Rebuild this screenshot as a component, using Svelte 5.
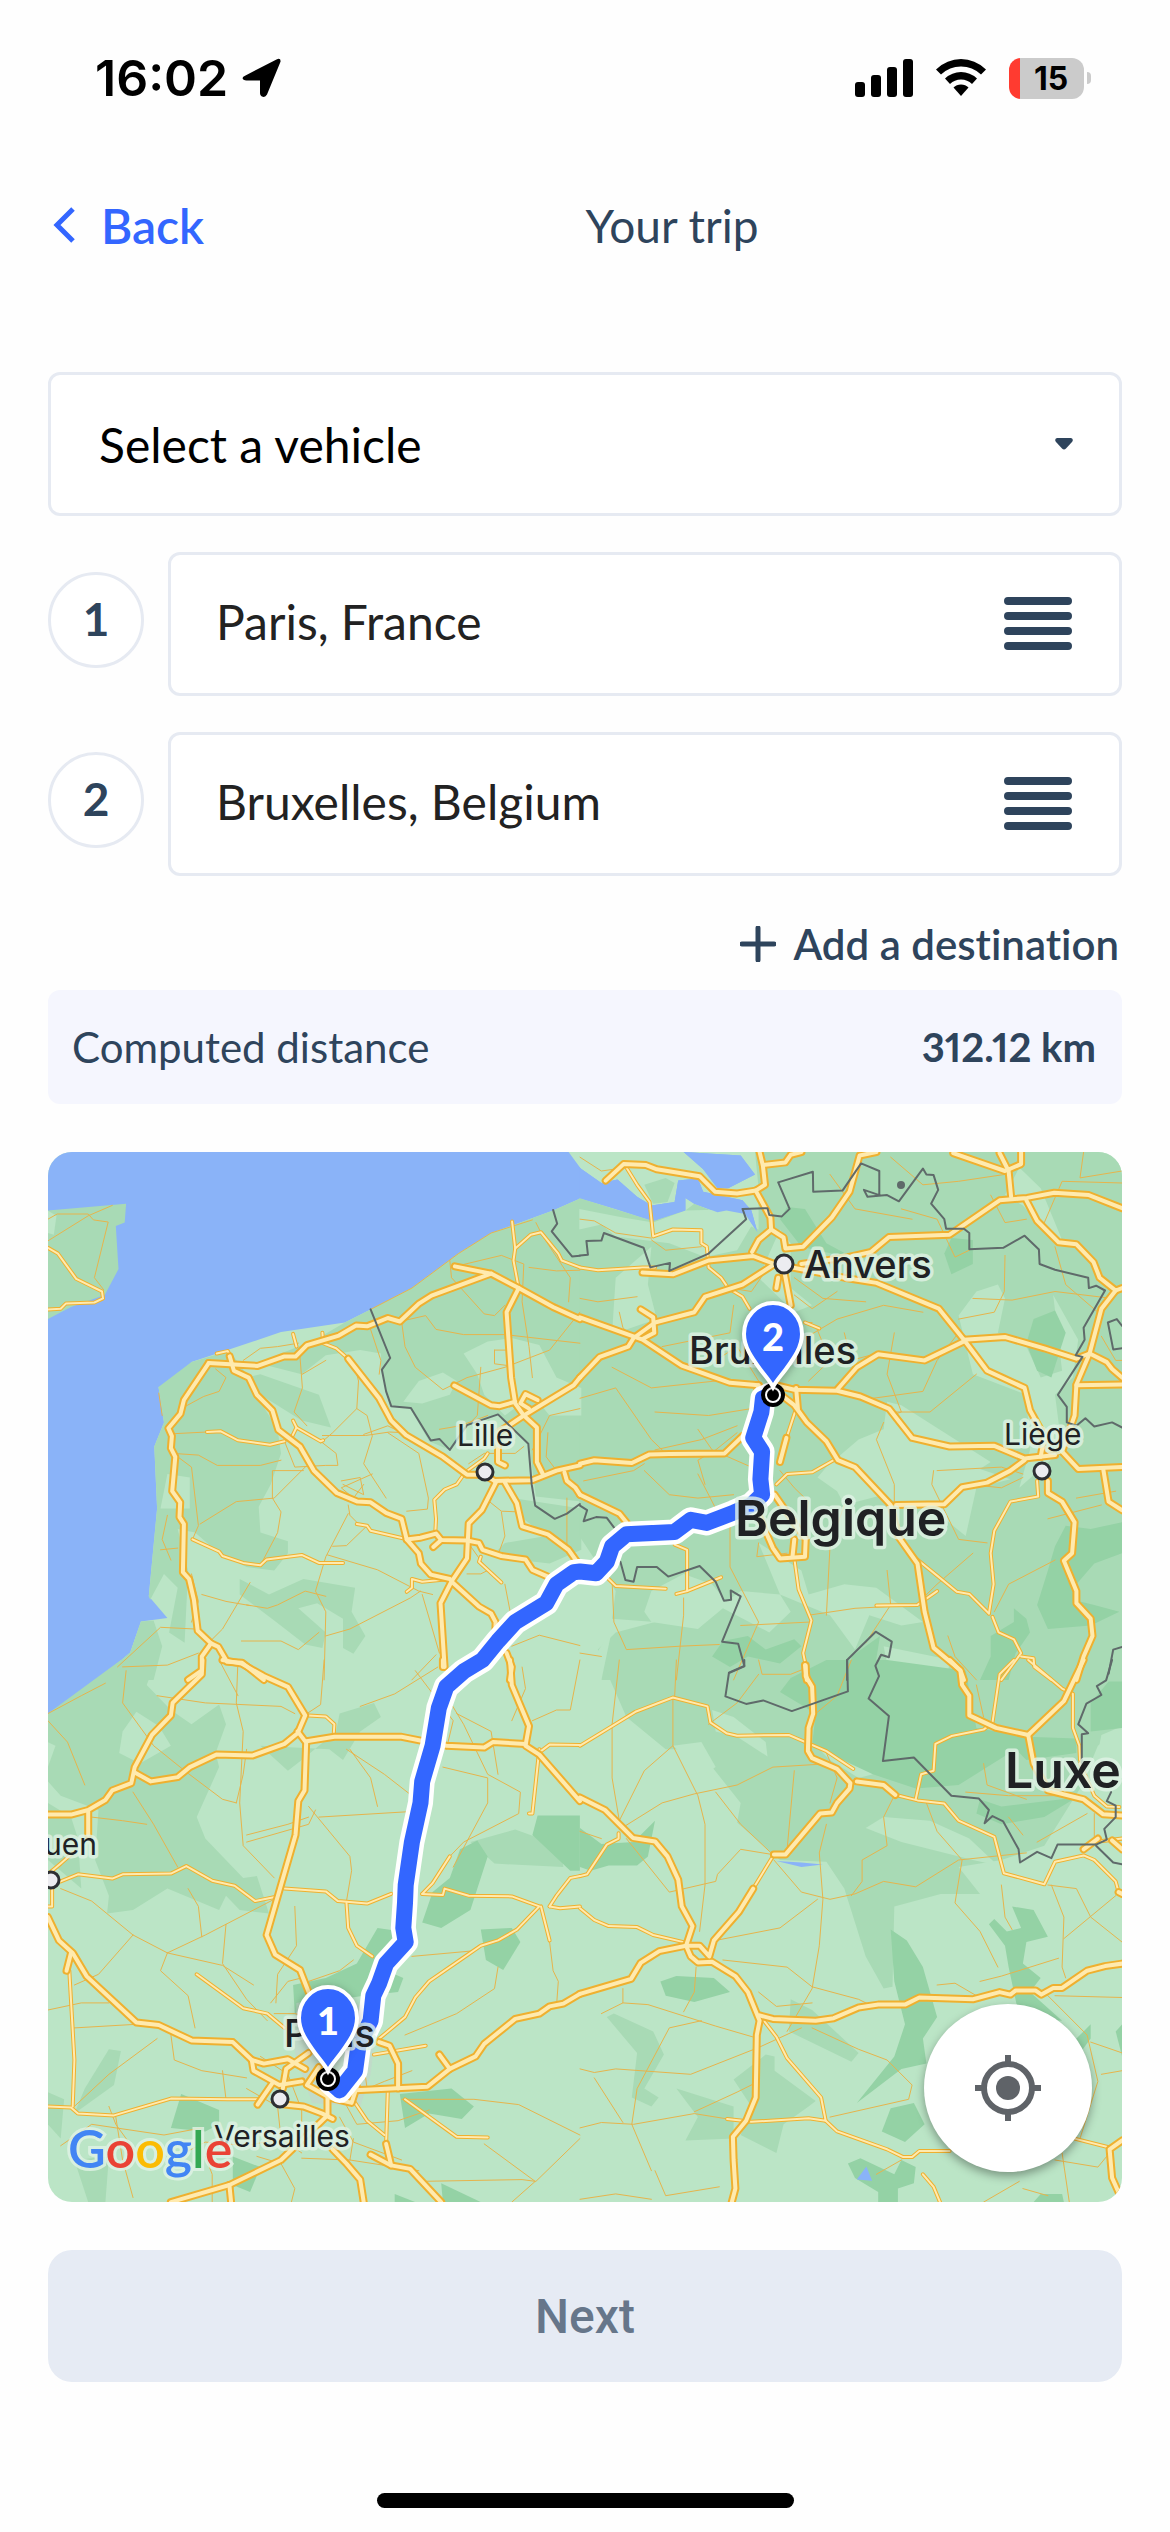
<script lang="ts">
  type Sheet = {
    x: number;
    y: number;
    sx: number;
    sy: number;
    water: string[];
    wood: string[];
    meadow: string[];
    forest: string[];
    minor: string[];
    medium: string[];
    major: string[];
    borders: string[];
  };

  // Map geometry, split in four sheets that each have their own origin and scale
  const nw: Sheet = {
    x: -8,
    y: -12,
    sx: 2.904,
    sy: 2.904,
    water: [
      '23,0 1530,0 1535,35 1572,85 1572,168 1490,205 1310,270 1215,330 1080,430 960,492 885,530 700,558 560,605 440,645 385,710 344,717 360,820 332,890 340,1070 316,1325 370,1388 293,1398 262,1488 168,1568 100,1625 23,1665',
    ],
    wood: [
      '23,205 250,185 246,240 220,250 228,375 188,450 90,485 23,520',
      '344,717 440,645 550,612 600,680 640,760 690,840 700,910 670,1000 635,1065 640,1140 720,1165 720,1200 680,1250 600,1240 520,1200 450,1140 400,1130 430,1250 420,1460 375,1430 400,1300 360,1260 320,1335 316,1325 340,1070 332,890 360,820',
      '885,530 960,492 1080,430 1215,330 1310,270 1490,205 1572,168 1572,1050 1440,1035 1420,880 1330,800 1240,830 1190,900 1130,875 1075,780 1020,770 990,670 990,620 930,610 830,625 760,680 640,650 700,620 800,580',
      '600,690 640,680 810,740 845,835 760,815 640,740',
      '580,1275 665,1320 765,1275 915,1300 905,1370 945,1440 910,1492 880,1475 880,1390 805,1345 750,1360 830,1430 820,1475 770,1465 680,1395 580,1320',
      '1370,1040 1572,1070 1572,1190 1480,1230 1310,1210 1350,1170 1470,1150 1390,1090',
      '293,1398 330,1395 355,1470 330,1568 168,1568 262,1488',
    ],
    meadow: [
      '23,205 48,220 40,275 23,270',
      '370,970 435,980 435,1070 350,1070',
      '1230,620 1300,585 1370,575 1450,595 1500,690 1572,720 1572,800 1480,800 1430,740 1350,800 1290,740 1270,680',
      '1055,760 1100,700 1170,675 1210,700 1190,740 1110,765',
    ],
    forest: [],
    minor: [
      '23,230 50,215 140,215 155,232 198,238 158,400 185,435',
      '23,293 140,220 210,190',
      '960,492 1080,430 1215,330 1310,270 1430,232',
      '960,550 990,640 985,680',
      '1045,527 1120,510 1150,550 1230,565 1350,565 1568,590',
      '1190,350 1195,400 1290,505 1320,510 1350,480',
      '1215,365 1340,335 1405,360 1400,470 1420,600 1430,690',
      '1050,527 1060,600 1090,660 1170,725 1240,690 1350,660 1480,610 1568,500',
      '1420,370 1500,380 1568,378',
      '1440,240 1460,280 1540,400 1535,470',
      '755,630 762,720 738,790 775,830',
      '762,680 830,640',
      '590,640 640,605 690,600 750,590',
      '910,640 925,700 920,780 850,850 815,880',
      '920,780 950,800 965,860 940,940 1005,1040',
      '940,855 1010,830 1050,850',
      '820,858 945,858 1015,848 1060,850',
      '700,930 640,945 515,945 460,915 385,910',
      '770,950 680,1040 570,1050 465,1115',
      '765,960 675,960 675,1040 700,1080 690,1140 640,1235',
      '710,875 740,950 830,945 865,945 860,910 815,875',
      '388,853 485,848',
      '345,735 355,800',
      '410,780 475,745 520,730 540,690 510,665',
      '443,1160 460,1120 440,950 400,920',
      '350,1190 400,1185',
      '895,1085 830,1210 800,1310 830,1370 825,1568',
      '895,1060 900,1090 930,1120',
      '1065,1078 1125,1072 1128,1040 1100,910 1010,850',
      '850,1180 890,1178 950,1120',
      '835,1205 980,1248 1100,1310 1140,1320',
      '600,1350 660,1360 690,1350 770,1310 830,1325',
      '610,1285 530,1420 500,1450',
      '470,1320 540,1340 610,1352',
      '585,1455 700,1455 750,1480 810,1430',
      '830,1440 900,1420 1075,1330 1105,1310',
      '1110,1320 1160,1490',
      '1370,1470 1450,1438 1568,1468',
      '225,1530 350,1415 450,1420',
      '240,1530 370,1525 460,1490',
      '1568,780 1480,800 1430,900',
      '1245,940 1290,910 1380,910 1405,890',
      '1220,850 1270,800 1280,660',
      '1320,610 1320,650 1360,655 1355,610 1320,610',
      '1475,850 1470,920 1500,960',
      '1150,1495 1080,1568',
      '875,990 930,980 940,1030 880,1000',
      '965,970 875,1010 910,1040 940,1000',
      '1340,1080 1350,1150 1330,1205',
      '1305,1050 1340,1078 1390,1080 1400,1120',
      '1350,1290 1375,1420',
      '380,1220 355,1160 370,1090',
      '440,1260 460,1340 440,1400',
      '1240,1165 1300,1250 1280,1260 1240,1260',
      '1160,840 1220,830 1300,800',
      '1530,1040 1530,1180',
    ],
    medium: [
      '735,563 745,600',
      '1380,315 1375,350 1390,430',
      '1371,237 1380,315 1425,275 1455,268 1505,330 1515,350 1568,370',
      '485,848 525,846 575,872 668,885 710,875',
      '23,313 52,330 105,403 180,440 183,460 158,472 75,475 60,490 23,492',
      '443,1160 520,1195 530,1208 590,1228 640,1235 658,1218 760,1205 810,1228 880,1228',
      '920,1115 950,1120 960,1135 1060,1158',
      '1230,972 1210,1000 1175,1015 1145,1045 1150,1100 1148,1140',
      '1280,1210 1275,1225 1340,1285',
      '730,865 745,835 735,815',
      '745,835 815,875 822,872',
      '513,620 545,613 552,625',
      '820,560 822,590 860,605 895,635',
      '1190,1275 1110,1283 1080,1275 1080,1300 1065,1312',
      '1235,965 1290,925 1300,910',
    ],
    major: [
      '490,648 632,656 708,629 742,629 775,596 868,568 918,539 950,541 1010,517 1045,527 1100,475 1137,452 1310,388',
      '1205,367 1310,388 1390,430 1490,485 1568,520',
      '490,648 418,755 408,795 373,837 383,860 380,895 393,920 384,1020 407,1052 405,1095 418,1115 415,1255 433,1275 447,1335 458,1425 497,1462 518,1472 543,1515 587,1518 650,1568',
      '497,1462 470,1500 470,1540 430,1568',
      '551,628 563,670 606,690 630,740 675,785 692,842 755,890 795,960 862,1025 922,1050 960,1052 1005,1083 1050,1100 1065,1160 1100,1200 1106,1230 1135,1262 1190,1275',
      '895,635 985,750 1020,815 1063,857 1170,920 1240,972 1290,972 1320,990',
      '1203,713 1310,770 1335,773 1380,760',
      '1390,430 1355,500 1368,690 1380,765 1405,800 1443,835 1443,935 1460,970',
      '1568,690 1550,712 1405,800 1330,850 1330,935 1350,945',
      '1320,990 1430,988 1500,960 1568,945',
      '1065,1160 1105,1155 1150,1143 1165,1162 1240,1163 1275,1170 1285,1190 1340,1208 1410,1218 1430,1248 1475,1268',
      '1165,1162 1142,1182',
      '1325,992 1283,1075 1245,1113 1240,1215 1195,1282 1163,1345 1175,1530',
      '1350,995 1385,1055 1400,1122 1475,1145 1535,1190 1560,1225',
      '1195,1282 1275,1355 1310,1375 1323,1400 1322,1440',
      '1355,1490 1370,1530 1365,1568',
      '1523,965 1530,990 1555,1010 1568,1030',
      '1420,780 1395,765 1410,738 1445,755',
    ],
    borders: [
      '960,492 1017,633 993,667 1005,730 1020,773 1077,778 1135,873 1160,868 1190,900 1240,828 1330,797 1418,882 1428,1000 1438,1062 1495,1100 1530,1085 1568,1057',
      '1490,203 1502,243 1486,265 1545,338 1568,336',
    ],
  };

  const ne: Sheet = {
    x: 532,
    y: -12,
    sx: 2.8,
    sy: 2.904,
    water: [
      '-2,80 60,125 105,115 160,165 200,190 265,180 275,118 330,112 345,150 455,175 480,205 497,268 462,215 410,205 385,210 320,185 295,168 295,205 205,235 100,200 -2,168',
      '290,35 450,45 490,100 415,140 385,140 345,85',
    ],
    wood: [
      '-2,168 205,235 295,205 320,185 500,260 500,140 490,35 1568,35 1568,1568 60,1568 50,1480 100,1430 210,1400 90,1390 100,1310 -2,1150',
      '180,130 240,110 265,125 245,180 205,185',
    ],
    meadow: [
      '-2,200 120,225 205,240 295,205 465,200 480,250 440,320 350,340 250,300 100,280 60,245 -2,260',
      '100,400 200,310 190,420 215,520 130,550 90,560',
      '860,760 900,770 1150,935 1120,955 1205,985 1110,1010 1080,1150 960,1050 880,1050 850,1030 740,1060 720,1020 665,980 690,950 780,870 850,840',
      '1325,450 1395,580 1380,690 1330,740 1350,900 1230,1010 1260,900 1250,740 1100,680 1060,510 1110,440 1170,420 1190,460 1170,560 1250,600 1290,690 1350,670',
      '200,1310 290,1260 370,1290 410,1340 450,1310 560,1320 590,1370 530,1430 400,1360 330,1420 200,1400 180,1370',
      '500,1170 620,1250 640,1320 740,1290 830,1300 960,1400 900,1410 810,1380 770,1480 700,1380 560,1320',
      '1190,160 1230,80 1290,140 1350,290 1310,270 1240,190',
      '850,1470 1040,1510 1020,1568 870,1568',
      '500,400 560,260 590,300 590,430 650,480 600,500',
      '90,1420 -2,1568 60,1568',
    ],
    forest: [
      '580,195 630,200 690,300 770,345 620,310 560,230',
      '1040,285 1100,290 1100,360 1040,390 1020,330',
      '1270,520 1330,495 1360,560 1320,690 1280,670 1250,590',
      '1360,1120 1430,1130 1518,1110 1518,1200 1440,1230 1390,1290 1400,1340 1440,1350 1510,1370 1430,1410 1310,1420 1280,1350 1310,1250 1330,1180',
      '400,1455 470,1440 520,1480 600,1450 620,1470 560,1520 470,1500 420,1530 370,1500',
      '1150,1440 1215,1400 1215,1360 1250,1390 1260,1430 1220,1490 1200,1568 1120,1568 1150,1500',
      '760,1500 840,1440 820,1568 760,1568',
    ],
    minor: [
      '630,530 650,530',
      '110,500 120,545 150,575',
      '600,450 650,490 720,440',
      '590,600 720,520 850,480 960,500',
      '210,790 360,800 480,780',
      '330,840 370,900 480,950',
      '90,660 200,720 380,700',
      '0,750 100,720 200,870 240,910',
      '180,960 250,1030 330,1040 430,1030',
      '10,990 150,960 180,940',
      '330,970 380,1070',
      '350,1000 330,930 380,900 440,850',
      '660,540 700,640 640,700',
      '740,560 760,640 830,620',
      '880,560 860,680 900,790 870,800',
      '1100,460 1210,465 1330,440 1490,460',
      '1190,335 1188,440 1160,500 1060,520',
      '600,400 680,460 800,470',
      '900,200 1000,230 1050,340 1090,320',
      '700,100 770,200 930,230',
      '850,820 830,870 880,1000 880,1050',
      '740,930 860,1040',
      '990,960 985,1000 1060,1160 1140,1170',
      '1000,960 1180,950 1240,970',
      '1110,680 980,790 870,790',
      '640,1380 770,1360 950,1350',
      '740,1060 700,1180 690,1380',
      '450,1410 640,1400',
      '860,1250 870,1350 800,1460',
      '90,1280 95,1400 130,1480 280,1470 390,1465',
      '290,1330 290,1380 270,1568',
      '0,1490 60,1500',
      '500,1170 495,1210 580,1200',
      '1160,1370 1200,1290 1330,1220',
      '1390,1040 1500,1020',
      '1310,1100 1460,1060',
      '1300,240 1350,120 1518,125',
      '1410,35 1400,110 1518,90',
      '870,50 960,130 1060,120 1190,100',
      '230,600 420,560 430,480',
      '380,640 440,600 500,700',
      '0,230 40,235 100,270 200,285',
      '0,50 60,90 130,80',
      '420,430 480,440 520,380',
      '0,460 50,470 160,455',
      '440,830 340,870 210,900',
      '560,960 600,1010 640,1050 620,1150',
      '1030,1440 1050,1500 1110,1568',
      '1150,160 1190,240 1250,230',
      '1330,310 1360,420 1450,500',
      '1100,1200 1000,1290 940,1350',
      '420,1090 420,1240 500,1400 430,1568',
      '1460,570 1500,640 1518,640',
      '1060,560 1000,640 960,730 820,750',
      '200,290 240,320 340,310',
      '1240,980 1180,1010 1090,1000',
    ],
    medium: [
      '0,370 50,378 175,370 210,370',
      '130,80 160,130 195,180 205,280 260,260 340,262 340,300 355,310 360,370 395,400 415,430',
      '415,430 455,455 475,490',
      '630,530 670,547',
      '605,780 580,860',
      '550,1000 580,970 650,965 710,930',
      '600,1215 612,1305 648,1395 625,1490 632,1525',
      '1280,990 1283,1035 1205,1050 1160,1135 1150,1200 1158,1290 1145,1375',
      '1155,1385 1172,1430 1215,1450 1235,1490 1180,1568',
      '1235,1500 1270,1505 1272,1530 1320,1568',
      '935,1210 1000,1265 1055,1312 1090,1318 1145,1375',
      '830,1352 945,1350 1000,1310',
      '265,1175 300,1190 300,1310 270,1318',
      '80,1275 100,1295 240,1303',
      '300,1310 395,1270',
    ],
    major: [
      '72,118 122,70 185,73 215,85 335,105 378,150 440,155 492,147 518,130 512,75 503,35',
      '512,73 575,65 590,43 620,35',
      '492,147 533,225 535,260 500,290 482,325',
      '535,260 570,283 575,315 625,310 705,225 755,150 783,45 830,35',
      '1045,38 1190,90 1235,70 1235,35',
      '1175,38 1200,90 1207,165',
      '1518,198 1425,160 1328,153 1252,168 1175,175 1035,275 865,282 815,325 750,340 620,360',
      '1250,175 1280,235 1340,297 1390,303 1438,355 1455,400 1500,437 1518,430',
      '1500,437 1460,490 1427,620 1390,710 1385,800 1350,905',
      '1427,620 1475,645 1490,665 1518,690',
      '1390,712 1518,710',
      '175,385 260,390 360,350 485,337 545,360 740,400 830,415 1005,490 1075,580 1140,670 1245,720 1260,785 1300,860 1290,920',
      '545,360 455,420 350,455 320,500 210,530 150,575 135,600 55,630 0,690',
      '0,515 175,580 285,655 420,705 500,712',
      '170,492 205,515 208,560 175,578',
      '1075,580 1190,572 1300,605 1390,635 1427,620',
      '1075,585 965,640 835,622 775,660 720,725',
      '0,940 40,930 145,938 195,913 250,912 405,910 455,860',
      '570,370 590,480',
      '555,400 550,430',
      '550,730 600,770 635,820 690,875 722,930 770,950 870,1060 890,1150 945,1230 965,1370 990,1475 1065,1540 1075,1568',
      '500,712 490,750',
      '540,710 600,725 720,728 785,745 865,780 930,865 1035,890 1160,888 1245,925 1330,915',
      '885,1060 1020,1058 1070,1008 1140,995 1205,960 1245,930',
      '605,720 610,780',
      '578,865 560,935',
      '1350,905 1395,955 1518,950',
      '1465,955 1480,1050 1518,1075',
      '1310,990 1310,1025 1350,1050 1385,1110 1378,1200 1355,1222 1390,1310 1390,1345 1430,1390 1435,1440 1410,1500 1390,1568',
      '500,1090 540,1185 560,1215 630,1210 632,1160 545,1030',
      '600,1160 595,1210',
      '0,1030 110,1085 130,1110',
      '630,1525 635,1568',
    ],
    borders: [
      '0,335 22,333 18,293 60,292 67,270 178,313 197,370 252,357 250,380 360,330 465,230 455,200 525,198 530,218 565,222 587,200 555,123 652,92 653,150 735,147 787,68 838,90 838,160 795,145 805,165 860,160 893,178 960,83 970,100 990,102 1003,145 983,185 1020,230 1025,258 1075,258 1090,270 1090,317 1185,313 1245,278 1285,318 1287,360 1330,377 1423,400 1425,430 1445,423 1470,437 1410,545 1413,580 1388,625 1407,630 1338,740 1363,775 1363,820 1390,830 1415,808 1440,832 1490,820 1518,835',
      '1518,605 1493,608 1478,530 1503,520 1518,540',
      '0,1062 20,1075 10,1107 45,1095 75,1097 95,1125',
      '113,1225 127,1278 150,1283 160,1240 215,1240 247,1268 335,1237 380,1283 403,1338 423,1335 422,1308 450,1325 398,1457 443,1463 460,1527 417,1547',
      '748,1568 748,1510 828,1428 873,1457 865,1502 843,1495 827,1527 837,1556',
      '1480,1550 1493,1480 1518,1472',
    ],
  };

  const sw: Sheet = {
    x: -8,
    y: 508,
    sx: 2.904,
    sy: 2.8,
    water: [],
    wood: [
      '23,150 235,0 330,20 310,70 380,140 440,180 520,125 540,180 510,260 520,300 455,440 480,500 590,610 630,605 665,710 580,700 540,660 520,700 370,640 270,700 195,710 200,660 160,560 170,420 60,380 23,340',
      '23,400 90,440 110,500 120,640 23,560',
      '870,150 970,120 990,160 930,200 880,280 840,250 640,240 720,310 760,280 860,200',
      '1250,510 1380,475 1510,520 1520,580 1320,570',
      '130,1200 200,1090 235,1095 215,1190 100,1270',
      '23,1210 70,1230 60,1340 23,1300',
      '100,1400 200,1390 190,1518 140,1518',
    ],
    meadow: ['280,145 345,185 380,240 290,290 230,260 240,200', '23,230 45,240 23,300'],
    forest: [
      '1270,505 1300,550 1250,700 1165,750 1110,735 1140,650 1190,610 1220,530',
      '1445,435 1568,435 1568,590 1540,590 1430,490',
      '1280,755 1370,750 1395,790 1345,868 1295,840',
      '980,750 1050,760 1030,880 1055,890 1040,930 940,940 800,960 740,990 735,910 830,890 920,850',
      '410,1215 520,1260 520,1300 480,1320 380,1310',
      '1045,1215 1195,1200 1260,1250 1225,1285 1130,1270 1060,1310',
      '560,1390 640,1420 610,1490 560,1470',
      '1165,1465 1280,1518 1170,1518',
      '1030,1495 1090,1518 1030,1518',
    ],
    minor: [
      '825,0 815,125 760,160',
      '575,0 570,120 590,200 580,400 590,520 680,610',
      '520,0 575,100',
      '340,100 480,120 700,130 740,150',
      '23,150 120,100 190,65',
      '23,170 80,230 130,350',
      '250,30 240,120 330,240 420,310 530,390 570,400',
      '600,250 590,320 570,400',
      '810,440 1065,425',
      '780,410 900,550 905,590 890,675',
      '600,490 720,460 780,440',
      '600,510 780,460 800,420',
      '900,250 960,330 980,410',
      '890,250 1000,320 1080,380',
      '1180,100 1230,180 1300,320 1395,370 1390,430 1230,510 1190,550',
      '1170,300 1300,330 1300,400 1200,580',
      '1210,150 1310,200 1330,320',
      '60,640 150,675 270,770 370,820 480,770 690,665',
      '270,770 170,880 100,910',
      '370,820 350,870 430,940 450,1030',
      '470,775 460,690 430,640',
      '540,740 530,850 600,950 660,1010',
      '370,820 530,855 620,910',
      '740,690 745,800 690,880 685,960',
      '1080,830 1250,815',
      '1330,860 1320,920 1210,990 1060,1050',
      '780,900 870,870 910,840',
      '100,1030 280,1020',
      '23,980 120,960 200,960',
      '380,1050 390,1120 470,1150 600,1170',
      '220,1280 240,1400 270,1505',
      '200,1250 220,1300 310,1420',
      '100,1250 200,1160 340,1060',
      '530,1150 540,1230',
      '1050,1230 1260,1230 1390,1245 1568,1330',
      '1100,1460 1400,1455 1440,1460 1568,1340',
      '1290,1355 1438,1460 1370,1518',
      '870,1280 910,1350 1050,1400',
      '910,1340 900,1400 1100,1430',
      '760,1395 900,1400',
      '480,1390 500,1440 500,1518',
      '630,1390 700,1410 740,1480 730,1518',
      '1480,790 1490,870 1505,900 1500,970',
      '1090,30 1200,170 1180,250',
      '930,130 1030,95 1155,20',
      '1400,20 1410,80 1370,170',
      '1430,170 1500,140 1540,140 1568,0',
      '270,370 330,460 400,580',
      '150,440 240,450 310,460',
      '60,1360 150,1300 360,1330 470,1310',
      '400,1390 480,1350 600,1360 700,1340',
      '670,960 720,900 760,890',
      '680,990 740,990 830,1010',
      '640,1110 720,1160 760,1260 760,1360',
      '600,1200 690,1250 700,1340 760,1380',
      '940,1130 950,1200 1000,1180 1080,1150',
      '880,1230 920,1300 1040,1290 1130,1260',
    ],
    medium: [
      '60,620 110,600 210,612 240,600 380,598 425,577 500,618 565,632 625,675 690,662',
      '23,1250 90,1253 110,1270 215,1275 380,1228 545,1230 640,1230',
      '710,640 830,648 865,675 950,682 1020,655',
      '1110,655 1170,658 1175,640 1245,660 1370,662 1450,690 1385,755 1330,785 1280,800 1220,840 1130,900 1090,945 1060,1000 985,1060',
      '1110,655 1140,625 1190,550',
      '890,680 895,750 920,800 965,830',
      '780,155 830,158 855,180 853,210',
      '1450,250 1430,430 1420,430',
      '1455,255 1480,237 1568,238',
      '1480,690 1500,660 1540,610 1568,605',
      '1480,690 1510,695 1568,690',
      '1455,690 1480,785',
      '455,880 590,975 660,990 710,1030',
      '85,870 100,1120 95,1250',
      '1010,1205 1005,1355',
      '915,1240 950,1290 1000,1330',
      '970,1105 1120,1080',
      '1060,1230 1210,1335 1300,1337',
      '35,640 35,690 23,690',
      '23,600 60,570 95,540',
    ],
    major: [
      '472,0 470,40 385,120 380,155 325,210 275,300 265,345 210,365 190,392 140,420 90,433 23,433',
      '275,315 322,340 400,328 435,300 512,265 618,267 710,235 748,205 770,155 720,75 650,45 585,10 530,0',
      '748,200 770,228 855,215 1050,215 1180,240 1290,245 1315,230 1410,235',
      '773,228 768,365 750,395 742,490 700,630 658,770 683,825 755,868 780,930',
      '1365,0 1370,70 1420,185 1410,240 1450,265 1568,395',
      '140,425 140,490',
      '23,720 55,785 95,820 135,885 280,1015 345,1022 440,1065 560,1070 615,1120 650,1130 720,1118 770,1145',
      '90,820 77,870',
      '615,1120 620,1150 695,1190 760,1180',
      '705,1200 715,1145 780,1100',
      '675,1185 632,1245',
      '985,1070 1015,1080 1040,1130 1040,1200',
      '900,1205 1125,1195 1190,1145 1265,1110 1290,1075 1380,1005 1450,990 1480,970 1520,962 1568,935',
      '1190,1145 1160,1105',
      '710,1245 765,1250 820,1270 850,1285',
      '835,1220 835,1275 700,1400 550,1470 380,1518',
      '550,1470 555,1518',
      '850,1370 890,1410 930,1455 940,1518',
      '960,1385 1020,1415 1075,1425 1165,1518',
      '1005,1355 1020,1415',
      '810,1140 775,1190 840,1225 905,1240 920,1195',
      '1170,0 1170,20',
    ],
    borders: [],
  };

  const se: Sheet = {
    x: 532,
    y: 508,
    sx: 2.8,
    sy: 2.8,
    water: [],
    wood: [
      '60,0 1518,0 1518,190 1450,240 1400,360 1300,520 1180,560 1060,580 1120,655 1010,655 880,690 875,915 850,920 800,830 740,640 690,565 560,560 440,455 450,400 330,250 240,250 130,160',
      '75,1000 95,990 205,1040 235,1105 180,1200 220,1225 200,1250 145,1225 160,1100',
      '520,1105 545,1110 545,1150 660,1235 640,1250 570,1300 550,1380 450,1330 480,1250 430,1175',
      '270,1200 430,1250 430,1340 295,1345 330,1280',
      '590,950 650,980 780,1100 760,1125 585,1040',
    ],
    meadow: [
      '370,140 430,160 520,230 525,270 440,215 380,200',
      '260,240 340,230 380,300 350,320',
      '650,230 740,250 820,320 780,330 700,280',
      '800,470 850,440 980,450 1090,500 1170,575 1100,560 900,510',
      '1460,210 1518,185 1518,400 1430,360',
    ],
    forest: [
      '690,0 860,0 1080,30 1110,190 1250,215 1390,220 1390,260 1250,280 1220,250 1060,350 940,360 820,320 650,240 660,150 560,90 590,50',
      '1518,60 1518,190 1430,200 1430,120 1480,60',
      '1120,390 1180,410 1390,385 1300,440 1180,460 1110,430',
      '0,470 60,515 150,510 210,450 190,550 160,575 80,575 30,590 0,580',
      '225,900 270,885 375,890 420,930 320,958 240,940',
      '870,755 915,785 960,860 1000,1000 960,1060 970,1130 900,1145 775,1240 880,1110 910,1020 880,900',
      '1145,740 1160,725 1195,760 1235,750 1210,690 1270,700 1310,775 1250,790 1240,850 1290,890 1260,930 1350,1010 1230,1000 1200,860 1190,800',
      '870,1255 935,1240 965,1300 910,1350 845,1320',
      '750,1410 785,1395 880,1440 900,1400 940,1420 935,1465 890,1480 890,1518 835,1518 835,1490 770,1450',
      '1290,1495 1350,1495 1355,1518 1270,1518',
      '1390,1060 1430,1020 1430,1060 1400,1100',
      '1500,1040 1518,1020 1518,1110',
    ],
    minor: [
      '270,0 265,105',
      '110,0 90,180 90,330 110,450',
      '260,105 260,240 330,380 350,460 350,630 335,760',
      '0,480 60,500',
      '110,475 230,400 320,375 440,350 540,300 700,290',
      '380,370 450,460 540,545',
      '260,240 180,310 110,450',
      '600,310 580,530',
      '540,545 450,530 385,600 380,620 250,650 130,500',
      '543,560 620,650 700,670 770,655 850,620 940,635 1060,560 1250,540',
      '665,670 560,750 380,785',
      '690,460 670,540 680,670 670,800 650,920 580,1040',
      '700,400 720,330 690,260',
      '880,380 850,440 860,520 790,560 790,620 760,660',
      '400,840 580,860 650,915 780,950 820,970',
      '650,1030 780,1090 860,1120 930,1190 920,1230 700,1280',
      '120,960 190,965 380,1025 500,1060',
      '0,1145 40,1155 100,1145 310,1160 500,1085 620,1030',
      '0,1310 60,1295 150,1300 320,1270 412,1285',
      '340,1010 250,1030 160,1200 145,1300 200,1430',
      '320,1265 440,1210 500,1180',
      '40,1170 120,1295',
      '0,1510 100,1495 200,1510',
      '210,1430 240,1500 390,1475',
      '325,860 320,930 290,985',
      '60,990 120,960 120,920',
      '500,930 550,970 650,960',
      '970,400 1000,480 1070,560 1050,680 1120,760 1170,860',
      '1180,630 1190,720 1210,755',
      '1320,630 1355,720 1350,860 1360,890',
      '1310,630 1390,640 1430,720 1518,790',
      '1355,780 1500,660',
      '1120,900 1180,885 1340,835',
      '1000,910 1050,905 1110,940',
      '1300,930 1420,1050 1450,1180 1400,1340',
      '1330,940 1518,945',
      '1430,1070 1518,1100',
      '1460,1160 1518,1150',
      '1330,1400 1450,1420 1483,1380',
      '1230,1460 1130,1518',
      '1350,1380 1370,1518',
      '830,1440 900,1400',
      '1240,1480 1310,1500',
      '1110,70 1130,160',
      '500,0 510,40 590,40 640,20',
      '360,180 440,120 500,40',
      '660,150 720,100 760,0',
      '1130,290 1140,350 1250,390',
      '1080,370 1200,380 1390,380',
      '1440,430 1440,500',
      '1280,510 1420,430',
      '1200,440 1240,490',
    ],
    medium: [
      '0,240 90,185 155,145 260,105 357,130 365,175 410,205 440,212 585,210 690,255 765,305',
      '543,545 485,640',
      '940,390 955,320 990,310 995,235 1040,213 1130,195 1155,175 1175,40 1215,0',
      '1255,0 1350,80 1380,95 1380,190 1398,240 1400,280',
      '885,378 945,393 1020,402 1060,450 1160,495 1187,597 1300,628 1330,565 1410,547 1440,560 1500,620 1508,650',
      '0,605 20,600 75,517 108,500 108,485',
      '0,695 40,728 80,745 160,748 205,770 290,790',
      '515,1010 550,1055 580,1115 675,1225 688,1290 640,1283 480,1293 412,1285',
      '688,1290 720,1320 860,1370 905,1392 930,1392 950,1375 1035,1375',
      '960,1440 990,1475 1008,1518',
      '1385,1340 1483,1365',
      '1400,290 1440,380 1475,410 1510,412',
      '1440,510 1518,500',
    ],
    major: [
      '0,385 70,420 148,498 210,508 245,550 275,615 285,690 315,745 297,800 222,815 170,848 143,893 0,935',
      '297,800 335,800 362,830 375,785 445,705 485,640',
      '297,800 310,830 330,847 370,845 435,885 470,930 503,1010 495,1050 492,1225 465,1290 428,1335 430,1400 435,1480 425,1518',
      '503,995 540,1005 660,1010 710,1003 780,973 835,965 910,965 950,945 1100,950 1175,930 1205,937 1220,925 1275,925 1292,937 1325,918 1350,918 1420,870 1470,857 1518,850',
      '543,545 575,545 672,430 705,427 720,400 755,360 757,345 720,305 650,275 638,255 640,190 653,150 650,75 632,45 632,15',
      '775,340 850,350 883,378',
      '1035,0 1065,30 1070,70 1090,100 1090,155 1165,190 1255,210 1355,115 1410,0',
      '1255,210 1270,290 1310,365 1410,390 1465,432 1518,435',
      '1518,1345 1483,1370 1490,1450 1510,1495',
      '1490,505 1518,530',
      '1410,530 1450,500',
      '1508,650 1518,655',
    ],
    borders: [
      '460,0 460,18 417,37 407,102 465,123 513,113 593,143 750,88 748,0',
      '837,46 808,108 865,157 848,283 935,273 1040,380 1117,388 1145,420 1133,457 1155,437 1185,452 1228,530 1232,567 1280,537 1320,555 1337,517 1445,517 1475,503 1468,473 1500,440 1500,408 1475,395 1487,370',
      '1405,290 1405,208 1423,205 1395,180 1418,122 1460,98 1447,73 1473,57 1490,0',
      '1445,520 1493,567 1518,572',
    ],
  };

  const sheets = [nw, ne, sw, se];

  // Small lakes and the city area lie above the vegetation
  const lakes = [
    place(se, '550,563 620,567 680,573 620,580'),
    place(se, '775,1455 802,1418 818,1458'),
  ];
  const city = place(sw, '745,960 850,940 940,970 975,1040 960,1160 930,1250 790,1240 740,1100');

  const route = [
    place(ne, '545,735 512,750 508,790 485,865 510,905 505,985 510,1030 480,1060 430,1082 355,1112 310,1103 265,1138 130,1145 90,1180 75,1225 45,1258 0,1253'),
    place(nw, '1550,1255 1500,1290 1470,1345 1380,1400 1330,1455 1285,1510'),
    place(sw, '1230,32 1180,75 1158,135 1140,240 1110,340 1105,400 1080,510 1062,630 1060,680 1055,750 1062,790 1005,850 985,905 968,940 960,1010 925,1080 915,1150 870,1205 835,1175'),
  ].join(' ');

  const cities = [
    { x: 736, y: 112, r: 9 },
    { x: 437, y: 320, r: 8 },
    { x: 994, y: 319, r: 8 },
    { x: 232, y: 947, r: 8 },
    { x: 3, y: 728, r: 8 },
  ];

  const labels = [
    { text: 'Anvers', x: 756, y: 126, kind: 'large' },
    { text: 'Bruxelles', x: 641, y: 212, kind: 'large' },
    { text: 'Paris', x: 236, y: 895, kind: 'large' },
    { text: 'Lille', x: 409, y: 294, kind: 'small' },
    { text: 'Liège', x: 956, y: 293, kind: 'small' },
    { text: 'uen', x: -4, y: 703, kind: 'small' },
    { text: 'Versailles', x: 166, y: 995, kind: 'small' },
    { text: 'Belgique', x: 687, y: 384, kind: 'country' },
    { text: 'Luxe', x: 957, y: 636, kind: 'country' },
  ];

  const pins = [
    { n: 1, x: 280, y: 927 },
    { n: 2, x: 725, y: 243 },
  ];

  let vehicle = $state('');
  let stops = $state([{ place: 'Paris, France' }, { place: 'Bruxelles, Belgium' }]);

  function place(sheet: Sheet, points: string) {
    return points
      .split(' ')
      .map((pair) => {
        const [px, py] = pair.split(',').map(Number);
        return `${(px / sheet.sx + sheet.x).toFixed(1)},${(py / sheet.sy + sheet.y).toFixed(1)}`;
      })
      .join(' ');
  }

  function layer(name: 'water' | 'wood' | 'meadow' | 'forest' | 'minor' | 'medium' | 'major' | 'borders') {
    return sheets.flatMap((sheet) => sheet[name].map((points) => place(sheet, points)));
  }

  const addStop = () => stops.push({ place: '' });
</script>

<div class="screen">
  <div class="status">
    <div class="time">
      <span>16:02</span>
      <svg width="40" height="40" viewBox="0 0 40 40" aria-hidden="true">
        <path d="M3.500 17.500 34.500 1.400q4.500-1.800 4 2.400L25 36.500q-2 3.800-5.500 1.700-1.500-1-1.500-3V22.500H4.500Q1 22.300.6 20.200.5 18.500 3.500 17.500Z" />
      </svg>
    </div>
    <div class="indicators">
      <svg width="58" height="38" viewBox="0 0 58 38" aria-hidden="true">
        <rect x="0" y="23" width="10" height="15" rx="3" />
        <rect x="16" y="16" width="10" height="22" rx="3" />
        <rect x="32" y="8" width="10" height="30" rx="3" />
        <rect x="48" y="0" width="10" height="38" rx="3" />
      </svg>
      <svg width="50" height="38" viewBox="0 0 50 38" aria-hidden="true">
        <path d="M0 10.500Q11 0 25 0T50 10.500L45 15.500Q36.500 7.500 25 7.500T5 15.500Z" />
        <path d="M9 19.500Q16 13 25 13T41 19.500L36 25Q31.500 20.500 25 20.500T14 25Z" />
        <path d="M17.500 28.500Q20.500 25.500 25 25.500T32.500 28.500L25 37Z" />
      </svg>
      <div class="battery"><span>15</span></div>
    </div>
  </div>

  <header>
    <button class="back" type="button">
      <svg width="22" height="36" viewBox="0 0 22 36" aria-hidden="true"><path d="M20 2 4 18 20 34" /></svg>
      Back
    </button>
    <h1>Your trip</h1>
  </header>

  <main>
    <div class="field vehicle">
      <select aria-label="Vehicle" bind:value={vehicle}>
        <option value="">Select a vehicle</option>
      </select>
      <svg width="18" height="12" viewBox="0 0 18 12" aria-hidden="true">
        <path d="M2 0H16Q19 1 17 4L11 10.500Q9 12.500 7 10.500L1 4Q-1 1 2 0Z" />
      </svg>
    </div>

    {#each stops as stop, i}
      <div class="stop">
        <label class="number" for="stop-{i}">{i + 1}</label>
        <div class="field">
          <input id="stop-{i}" type="text" bind:value={stop.place} />
          <button class="handle" type="button" aria-label="Reorder">
            <svg width="68" height="54" viewBox="0 0 68 54" aria-hidden="true">
              <path d="M4 4H64M4 19H64M4 34H64M4 49H64" />
            </svg>
          </button>
        </div>
      </div>
    {/each}

    <button class="add" type="button" onclick={addStop}>
      <svg width="36" height="36" viewBox="0 0 36 36" aria-hidden="true"><path d="M18 2V34M2 18H34" /></svg>
      Add a destination
    </button>

    <div class="distance">
      <span>Computed distance</span>
      <strong>312.12 km</strong>
    </div>

    <div class="map">
      <svg class="canvas" viewBox="0 0 1074 1050" preserveAspectRatio="xMidYMid slice" role="img" aria-label="Trip map">
        <rect class="land" width="1074" height="1050" />
        {#each layer('water') as points}<polygon class="water" {points} />{/each}
        {#each layer('wood') as points}<polygon class="wood" {points} />{/each}
        {#each layer('meadow') as points}<polygon class="land" {points} />{/each}
        {#each layer('forest') as points}<polygon class="forest" {points} />{/each}
        {#each ne.water as points}<polygon class="water" points={place(ne, points)} />{/each}
        {#each lakes as points}<polygon class="water" {points} />{/each}
        <polygon class="city-area" points={city} />

        {#each layer('minor') as points}<polyline class="minor" {points} />{/each}
        {#each layer('medium') as points}<polyline class="medium casing" {points} />{/each}
        {#each layer('medium') as points}<polyline class="medium" {points} />{/each}
        {#each layer('major') as points}<polyline class="major casing" {points} />{/each}
        {#each layer('major') as points}<polyline class="major" {points} />{/each}
        {#each layer('borders') as points}<polyline class="border" {points} />{/each}
        <circle class="enclave" cx="853" cy="33" r="4" />

        <polyline class="route outline" points={route} />
        <polyline class="route" points={route} />

        {#each cities as { x, y, r }}<circle class="town" cx={x} cy={y} {r} />{/each}
        {#each labels as { text, x, y, kind }}<text class="label {kind}" {x} {y}>{text}</text>{/each}

        {#each pins as { n, x, y }}
          <g transform="translate({x} {y})">
            <circle r="12" />
            <circle class="ring" r="7" />
            <circle r="5" />
            <path class="pin" d="M0-8C-3-14-7-18-13-26-21-37-29-48-29-61A29 31 0 0 1 29-61C29-48 21-37 13-26 7-18 3-14 0-8Z" />
            <text class="pin-number" y="-44">{n}</text>
          </g>
        {/each}

        <text class="google" x="20" y="1016">
          <tspan fill="#4285f4">G</tspan><tspan fill="#ea4335">o</tspan><tspan fill="#fbbc04">o</tspan><tspan fill="#4285f4">g</tspan><tspan fill="#34a853">l</tspan><tspan fill="#ea4335">e</tspan>
        </text>
      </svg>
      <button class="locate" type="button" aria-label="My location">
        <svg width="66" height="66" viewBox="0 0 66 66" aria-hidden="true">
          <circle cx="33" cy="33" r="24" />
          <path d="M33 0V8M33 58V66M0 33H8M58 33H66" />
          <circle class="dot" cx="33" cy="33" r="12" />
        </svg>
      </button>
    </div>

    <button class="next" type="button" disabled>Next</button>
  </main>

  <div class="home"></div>
</div>

<style>
  :global(body) {
    margin: 0;
    background: #fefefe;
  }

  .screen {
    display: flex;
    flex-direction: column;
    min-height: 100vh;
    box-sizing: border-box;
    padding-bottom: 24px;
    font-family: Lato, 'Open Sans', sans-serif;
    color: #2e445c;
  }

  button {
    padding: 0;
    border: 0;
    background: none;
    font: inherit;
    color: inherit;
  }

  svg {
    flex: none;
  }

  .status {
    display: flex;
    justify-content: space-between;
    align-items: center;
    height: 156px;
    padding: 0 79px 0 95px;
    font-family: Inter, sans-serif;
    font-weight: 600;
    color: #000;
  }

  .time,
  .indicators {
    display: flex;
    align-items: center;
  }

  .time {
    gap: 14px;
    font-size: 50px;
  }

  .indicators {
    gap: 23px;
  }

  .battery {
    position: relative;
    display: flex;
    align-items: center;
    justify-content: center;
    width: 75px;
    height: 41px;
    margin-right: 7px;
    border-radius: 12px;
    background: linear-gradient(to right, #ff3b30 11px, #cbcbcb 11px);
    font-size: 32px;
    font-weight: 700;
  }

  .battery span {
    padding-left: 9px;
  }

  .battery::after {
    content: '';
    position: absolute;
    left: 78px;
    width: 4px;
    height: 12px;
    border-radius: 0 6px 6px 0;
    background: #cbcbcb;
  }

  header {
    display: flex;
    align-items: center;
    gap: 18px;
    height: 138px;
    padding: 0 48px;
  }

  .back {
    display: flex;
    align-items: center;
    gap: 26px;
    padding-left: 5px;
    font-size: 48px;
    font-weight: 600;
    color: #36f;
  }

  .back path {
    fill: none;
    stroke: #36f;
    stroke-width: 5;
  }

  h1 {
    flex: 1;
    margin: 0;
    font-size: 46px;
    font-weight: 400;
    text-align: center;
  }

  main {
    display: flex;
    flex-direction: column;
    padding: 78px 48px 0;
  }

  .field {
    position: relative;
    display: flex;
    flex: 1;
    align-items: center;
    height: 144px;
    box-sizing: border-box;
    border: 3px solid #e6eaf2;
    border-radius: 12px;
    background: #fff;
  }

  .vehicle {
    flex: none;
  }

  select,
  input {
    flex: 1;
    min-width: 0;
    height: 100%;
    box-sizing: border-box;
    padding: 0 45px 5px;
    border: 0;
    outline: none;
    background: none;
    font: inherit;
    font-size: 48px;
    color: #222;
    appearance: none;
  }

  select {
    padding: 0 48px;
    color: #000;
  }

  .vehicle svg {
    position: absolute;
    right: 46px;
    fill: #2e445c;
    pointer-events: none;
  }

  .stop {
    display: flex;
    gap: 24px;
    margin-top: 36px;
  }

  .number {
    display: flex;
    align-items: center;
    justify-content: center;
    width: 96px;
    height: 96px;
    margin-top: 20px;
    padding-bottom: 3px;
    box-sizing: border-box;
    border: 3px solid #e6eaf2;
    border-radius: 50%;
    background: #fff;
    font-size: 46px;
    font-weight: 700;
  }

  .handle {
    display: flex;
    padding-right: 47px;
  }

  .handle path {
    stroke: #2e445c;
    stroke-width: 8;
    stroke-linecap: round;
  }

  .add {
    display: flex;
    align-items: center;
    align-self: flex-end;
    gap: 18px;
    height: 60px;
    margin: 38px 3px 16px 0;
    font-size: 42px;
    font-weight: 600;
    font-variant-ligatures: none;
  }

  .add path {
    fill: none;
    stroke: #2e445c;
    stroke-width: 5;
    stroke-linecap: round;
  }

  .distance {
    display: flex;
    align-items: center;
    justify-content: space-between;
    height: 114px;
    padding: 0 26px 0 24px;
    border-radius: 12px;
    background: #f5f6fe;
    font-size: 42px;
  }

  .distance strong {
    font-size: 40px;
    font-variant-numeric: proportional-nums;
  }

  .map {
    position: relative;
    height: 1050px;
    margin: 48px 0;
    border-radius: 24px;
    overflow: hidden;
  }

  .canvas {
    display: block;
    width: 100%;
    height: 100%;
  }

  .land {
    fill: #bbe5c6;
  }

  .water {
    fill: #8ab3f8;
  }

  .wood {
    fill: #a8dab5;
  }

  .forest {
    fill: #94d2a5;
  }

  .city-area {
    fill: #c4d3cc;
    opacity: 0.6;
  }

  polyline {
    fill: none;
    stroke: #ffeaae;
    stroke-linecap: round;
    stroke-linejoin: round;
  }

  .minor {
    stroke: #e6b44c;
    stroke-width: 1;
  }

  .medium {
    stroke-width: 2;
  }

  .medium.casing {
    stroke: #efb02f;
    stroke-width: 4;
  }

  .major {
    stroke-width: 4;
  }

  .major.casing {
    stroke: #efb02f;
    stroke-width: 8;
  }

  .border {
    stroke: #5f6a6a;
    stroke-width: 2;
  }

  .enclave {
    fill: #5f6a6a;
  }

  .route {
    stroke: #36f;
    stroke-width: 16;
    stroke-linecap: butt;
  }

  .route.outline {
    stroke: #fff;
    stroke-width: 25;
  }

  .town {
    fill: #ececf0;
    stroke: #2d2f33;
    stroke-width: 3;
  }

  .label {
    font-family: Inter, sans-serif;
    fill: #202124;
    stroke: rgba(225, 243, 230, 0.8);
    stroke-width: 7;
    stroke-linejoin: round;
    paint-order: stroke;
  }

  .large {
    font-size: 38px;
    font-weight: 500;
  }

  .small {
    font-size: 30px;
  }

  .country {
    font-size: 50px;
    font-weight: 600;
  }

  .ring {
    fill: none;
    stroke: #fff;
    stroke-width: 2;
  }

  .pin {
    fill: #36f;
    stroke: #fff;
    stroke-width: 4;
    filter: drop-shadow(0 2px 4px rgba(0, 0, 0, 0.3));
  }

  .pin-number {
    font-size: 38px;
    font-weight: 900;
    text-anchor: middle;
    fill: #fff;
  }

  .google {
    font-size: 52px;
    font-weight: 600;
    stroke: rgba(225, 243, 230, 0.8);
    stroke-width: 6;
    paint-order: stroke;
  }

  .locate {
    position: absolute;
    right: 30px;
    bottom: 30px;
    display: flex;
    align-items: center;
    justify-content: center;
    width: 168px;
    height: 168px;
    border-radius: 50%;
    background: #fff;
    box-shadow: 0 4px 10px rgba(0, 0, 0, 0.35);
  }

  .locate circle,
  .locate path {
    fill: none;
    stroke: #5f6368;
    stroke-width: 6;
  }

  .locate .dot {
    fill: #5f6368;
    stroke: none;
  }

  .next {
    height: 132px;
    border-radius: 24px;
    background: #e6ebf4;
    font-family: Roboto, sans-serif;
    font-size: 48px;
    font-weight: 500;
    color: #66768a;
  }

  .home {
    width: 417px;
    height: 15px;
    margin: auto auto 0;
    border-radius: 8px;
    background: #000;
  }
</style>
